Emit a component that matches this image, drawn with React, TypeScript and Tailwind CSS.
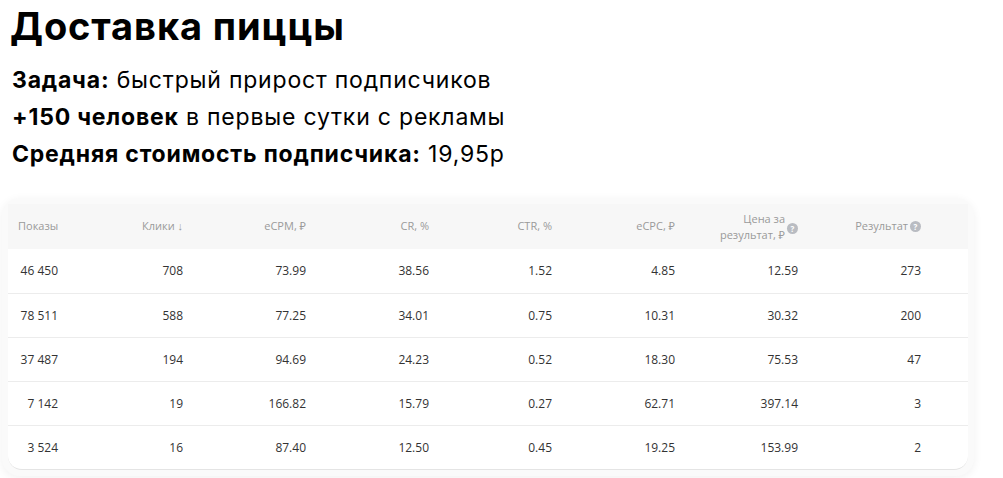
import React from "react";

const rows = [
  ["46 450", "708", "73.99", "38.56", "1.52", "4.85", "12.59", "273"],
  ["78 511", "588", "77.25", "34.01", "0.75", "10.31", "30.32", "200"],
  ["37 487", "194", "94.69", "24.23", "0.52", "18.30", "75.53", "47"],
  ["7 142", "19", "166.82", "15.79", "0.27", "62.71", "397.14", "3"],
  ["3 524", "16", "87.40", "12.50", "0.45", "19.25", "153.99", "2"],
];

function Q() {
  return (
    <span className="ml-[2px] inline-flex h-[11px] w-[11px] items-center justify-center rounded-full bg-[#b9bcc2] text-[8px] font-bold leading-none text-white">
      ?
    </span>
  );
}

export default function App() {
  return (
    <div className="h-[478px] w-[1003px] overflow-hidden bg-white" style={{ fontFamily: "Inter, 'Noto Sans', sans-serif" }}>
      <div className="pl-[10px] pt-[4px]">
        <h1 className="text-[38px] font-bold leading-[44px] tracking-[0.9px] text-black">Доставка пиццы</h1>
      </div>
      <div className="mt-[20px] flex flex-col gap-[13px] pl-[12px] text-[23px] leading-[24px] tracking-[0.8px] text-black">
        <div><b className="font-bold">Задача:</b> быстрый прирост подписчиков</div>
        <div><b className="font-bold">+150 человек</b> в первые сутки с рекламы</div>
        <div><b className="font-bold">Средняя стоимость подписчика:</b> 19,95р</div>
      </div>

      <div className="ml-[2px] mt-[32px] w-[972px] rounded-[18px] bg-[#fafafa] p-[6px] shadow-[0_2px_10px_rgba(0,0,0,0.06)]" style={{ fontFamily: "'Open Sans', 'Noto Sans', sans-serif" }}>
        <div className="overflow-hidden rounded-b-[14px] border-b border-[#e4e4e4] bg-white">
          <div className="grid h-[45px] grid-cols-[60px_123px_123px_123px_123px_123px_123px_123px] items-center bg-[#f7f7f7] text-[11px] text-[#9a9a9a]">
            <div className="pl-[10px]">Показы</div>
            <div className="pr-[8px] text-right">Клики ↓</div>
            <div className="pr-[8px] text-right">eCPM, ₽</div>
            <div className="pr-[8px] text-right">CR, %</div>
            <div className="pr-[8px] text-right">CTR, %</div>
            <div className="pr-[8px] text-right">eCPC, ₽</div>
            <div className="flex items-center justify-end pr-[8px]">
              <div className="text-right leading-[16px]">Цена за<br />результат, ₽</div>
              <div className="self-start pt-[9px]"><Q /></div>
            </div>
            <div className="flex items-center justify-end pr-[8px]">
              <span>Результат</span>
              <Q />
            </div>
          </div>
          {rows.map((r, i) => (
            <div key={i} className={`grid h-[44px] grid-cols-[60px_123px_123px_123px_123px_123px_123px_123px] items-center text-[12px] text-[#333] ${i > 0 ? "border-t border-[#ececec]" : ""}`}>
              {r.map((c, j) => (
                <div key={j} className={`text-right ${j === 0 ? "pr-[10px]" : "pr-[8px]"}`}>{c}</div>
              ))}
            </div>
          ))}
        </div>
      </div>
    </div>
  );
}
